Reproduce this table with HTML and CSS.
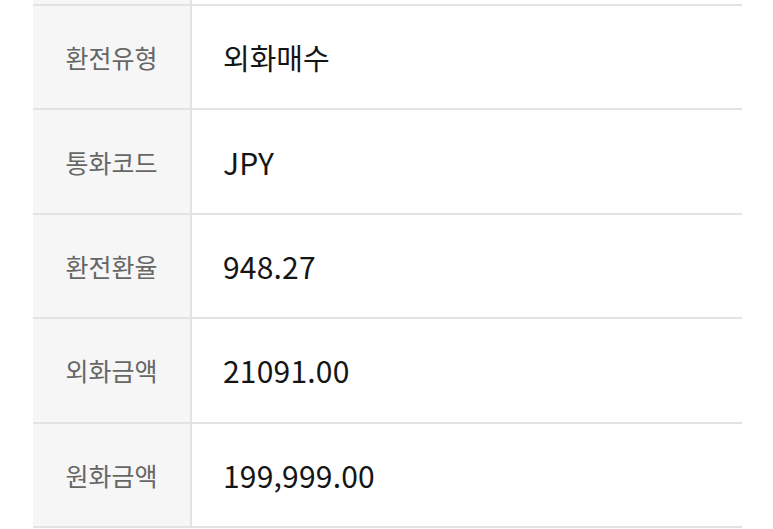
FILE: index.html
```html
<!DOCTYPE html>
<html lang="ko">
<head>
<meta charset="utf-8">
<link rel="stylesheet" href="styles.css">
</head>
<body>
<div class="table">
  <div class="row row-cut"><div class="label"></div><div class="value"></div></div>
  <div class="row"><div class="label">환전유형</div><div class="value">외화매수</div></div>
  <div class="row"><div class="label">통화코드</div><div class="value num">JPY</div></div>
  <div class="row"><div class="label">환전환율</div><div class="value num">948.27</div></div>
  <div class="row"><div class="label">외화금액</div><div class="value num">21091.00</div></div>
  <div class="row"><div class="label">원화금액</div><div class="value num">199,999.00</div></div>
</div>
</body>
</html>
```
FILE: styles.css
```css
html, body {
  margin: 0;
  padding: 0;
  background: #ffffff;
}
body {
  font-family: "Noto Sans CJK KR", "Noto Sans", sans-serif;
  width: 773px;
  height: 529px;
  overflow: hidden;
}
.table {
  margin-left: 33px;
  width: 709px;
  display: flex;
  flex-direction: column;
}
.row {
  display: grid;
  grid-template-columns: 159px 1fr;
  height: 104.4px;
  box-sizing: border-box;
  border-bottom: 2px solid #e3e3e3;
}
.row-cut {
  height: 6px;
}
.label {
  background: #f6f6f6;
  border-right: 2px solid #e3e3e3;
  display: flex;
  align-items: center;
  justify-content: center;
  font-size: 25px;
  color: #666666;
}
.value {
  display: flex;
  align-items: center;
  padding-left: 31px;
  font-size: 29px;
  color: #151515;
}
.value.num {
  font-size: 30px;
  letter-spacing: 0.2px;
}
```
